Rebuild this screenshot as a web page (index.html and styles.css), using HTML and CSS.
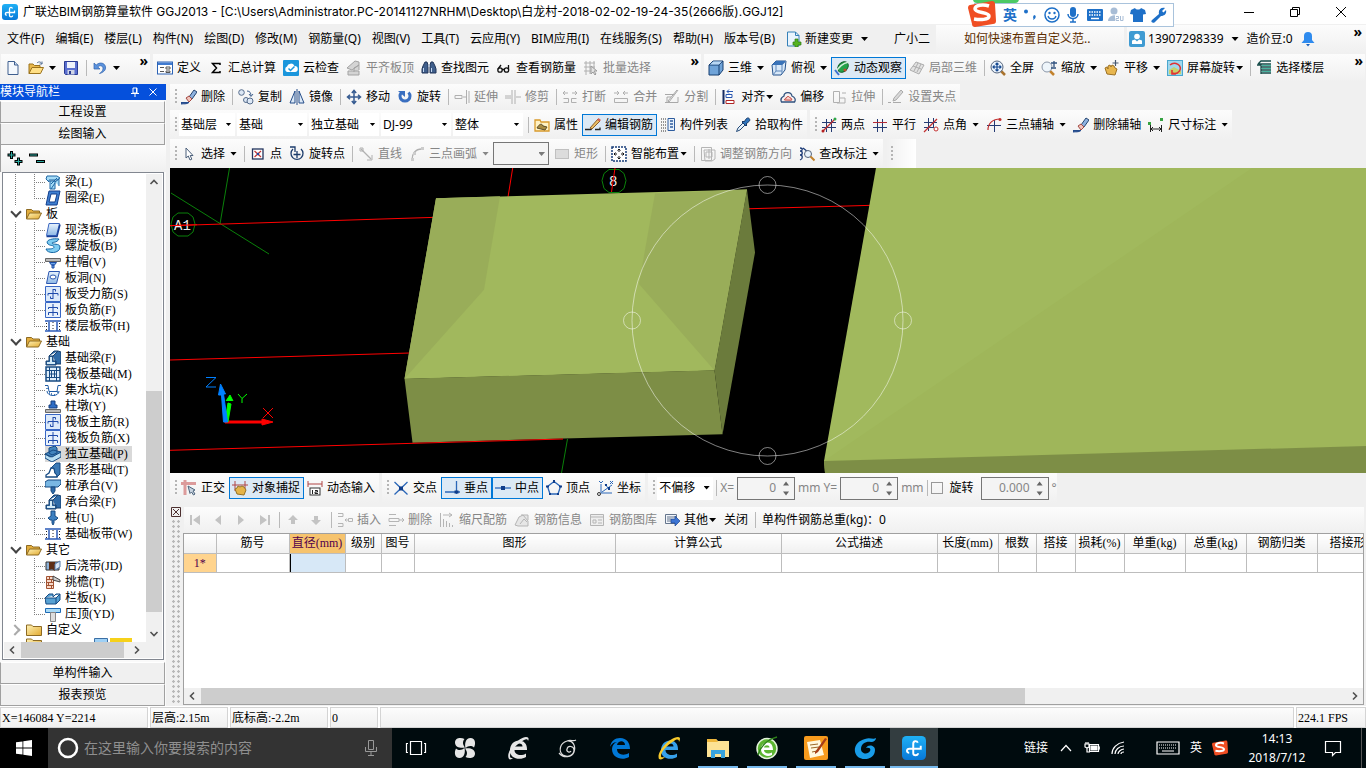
FILE: index.html
```html
<!DOCTYPE html>
<html lang="zh-CN">
<head>
<meta charset="utf-8">
<title>广联达BIM钢筋算量软件 GGJ2013</title>
<link rel="stylesheet" href="styles.css">
</head>
<body>
<svg class="sprite" aria-hidden="true">
<defs>
<linearGradient id="gb" x1="0" y1="0" x2="0" y2="1"><stop offset="0" stop-color="#e8f3fd"/><stop offset="1" stop-color="#8db8e6"/></linearGradient>
<linearGradient id="gy" x1="0" y1="0" x2="1" y2="1"><stop offset="0" stop-color="#fff3b8"/><stop offset="1" stop-color="#e2a92e"/></linearGradient>
<linearGradient id="ga" x1="0" y1="0" x2="0" y2="1"><stop offset="0" stop-color="#1fb0f5"/><stop offset="1" stop-color="#0878d8"/></linearGradient>
<symbol id="app" viewBox="0 0 16 16"><rect width="16" height="16" rx="3" fill="url(#ga)"/><path d="M10.500 4.500C10 3 7.500 3 7.500 5v6.500c0 1.800 3 1.800 3.200 0M12.500 6.500v2H5c-2.200 0-2.200 2.700-.2 2.700" fill="none" stroke="#fff" stroke-width="1.300"/></symbol>
<symbol id="new" viewBox="0 0 16 16"><path d="M3 1.500h6.500L13 5v9.500H3z" fill="#f4f8fd" stroke="#3f5f8f"/><path d="M9.500 1.500V5H13" fill="#c9dbf2" stroke="#3f5f8f"/></symbol>
<symbol id="open" viewBox="0 0 16 16"><path d="M1 13.500V4h4l1.500 1.500H12V8" fill="#e9b84b" stroke="#9b731d"/><path d="M1 13.500 4 7.500h11.500L12.500 13.500z" fill="#ffdf85" stroke="#9b731d"/><path d="M9 3c2-2 4-1 5 1m0-2.500V4h-2.500" fill="none" stroke="#536f94"/></symbol>
<symbol id="save" viewBox="0 0 16 16"><path d="M1.500 1.500h13v13h-12l-1-1z" fill="#5a6fd0" stroke="#2b3b92"/><path d="M4 2h8v6H4z" fill="#eef2fb"/><path d="M4.500 10h7v4.500h-7z" fill="#cfd5e6"/><path d="M6 11h2v3H6z" fill="#2b3b92"/></symbol>
<symbol id="undo" viewBox="0 0 16 16"><path d="M2 3v6h6L5.800 7C8 4.500 11.500 6 11 9c-.3 2-2 3.500-3.500 4.500 4-1 6.500-3.500 6-6.500C13 3 8 1.500 4.200 5z" fill="#5c93dd" stroke="#2e61ad" stroke-width=".7"/></symbol>
<symbol id="define" viewBox="0 0 16 16"><rect x=".5" y="2" width="15" height="12" fill="#fff" stroke="#2c63b5"/><path d="M1 2.500h14V5H1z" fill="#3f7ad0"/><path d="M3 7.500h4M3 11.500h4M9 7h4v2H9zM9 11h4v1.500H9z" stroke="#555" fill="none"/></symbol>
<symbol id="sigma" viewBox="0 0 16 16"><path d="M12 5V3.500H4.500L8.500 8l-4 4.500H12V11" fill="none" stroke="#000" stroke-width="1.500"/></symbol>
<symbol id="cloud" viewBox="0 0 16 16"><rect width="16" height="16" rx="1" fill="#1b96dc"/><path d="M4 12a3 3 0 0 1 0-5.500 4 4 0 0 1 7.500-.5A3 3 0 0 1 12 12z" fill="#fff"/><path d="m5.500 8.500 2 2 4-4" fill="none" stroke="#1b96dc" stroke-width="1.500"/></symbol>
<symbol id="gflat" viewBox="0 0 16 16"><path d="M1 8 9 1l4 1v3L6 10zM2 11h11v4H2zM8 12V8l5-3v5" fill="#d4d4d4" stroke="#a3a3a3"/></symbol>
<symbol id="bino" viewBox="0 0 16 16"><path d="M2 6 4 2h2l1 3v8H1V9zM14 6l-2-4h-2L9 5v8h6V9z" fill="#405f8c" stroke="#203558"/><path d="M2.500 8v4M10.500 8v4M7 6h2" stroke="#c4d9f2"/></symbol>
<symbol id="glass" viewBox="0 0 16 16"><g fill="none" stroke="#111" stroke-width="1.300"><circle cx="4" cy="10" r="2.200"/><circle cx="10.500" cy="10" r="2.200"/><path d="M6 9.500h2.300M2 9l3-4M12.500 9.500V5"/></g></symbol>
<symbol id="gbatch" viewBox="0 0 16 16"><path d="M1 3h11M1 7h11M1 11h7M3 1v14M7 1v13M11 1v8" stroke="#b0b0b0" fill="none"/><path d="M8 6v8l2-2 2 3 1-1-2-3h3z" fill="#e3e3e3" stroke="#9b9b9b"/></symbol>
<symbol id="cube" viewBox="0 0 16 16"><path d="M1 5 5 1h10v9l-4 5H1z" fill="#6fa3d8" stroke="#173e70"/><path d="M1 5h10v10M11 5l4-4" fill="none" stroke="#173e70"/><path d="M2 4.500 5.300 1.500h8.700L11 4.500z" fill="#b9d7f3"/></symbol>
<symbol id="topv" viewBox="0 0 16 16"><path d="M1 5 5 1h10l-1 9-4 5H2z" fill="#d8e8f8" stroke="#24518b"/><path d="M1 5 5 1h10l-4 4z" fill="#3973b9"/><path d="M11 5v9M11 5l4-4M5 5v6h6M5 11l-3 4" fill="none" stroke="#5e87ba"/></symbol>
<symbol id="orbit" viewBox="0 0 16 16"><ellipse cx="9" cy="7" rx="6" ry="4.500" transform="rotate(-45 9 7)" fill="#24a34a" stroke="#12602a"/><path d="M1 14C4 7 9 3 15 2" stroke="#d6efdc" stroke-width="1.500" fill="none"/><path d="m1 10 4 5" stroke="#3c6fd1" stroke-width="2"/><circle cx="11" cy="10" r="1.500" fill="#bf4a31"/></symbol>
<symbol id="gcube" viewBox="0 0 16 16"><path d="M1 10 7 2l8 3-5 9z" fill="#e2e2e2" stroke="#adadad"/><path d="m4 6 8 3M8 12l4-8M5 11l4-8" stroke="#adadad"/></symbol>
<symbol id="full" viewBox="0 0 16 16"><path d="m11 11 4 4" stroke="#a9732e" stroke-width="2.500"/><circle cx="7" cy="7" r="6" fill="#eaf3fc" stroke="#54647c"/><path d="M7 3v8M3 7h8M5.500 4.500 7 3l1.500 1.500M5.500 9.500 7 11l1.500-1.500M4.500 5.500 3 7l1.500 1.500M9.500 5.500 11 7 9.500 8.500" fill="none" stroke="#184a91" stroke-width="1.200"/></symbol>
<symbol id="zoomi" viewBox="0 0 16 16"><path d="m9 11 4 4" stroke="#c2822c" stroke-width="2.500"/><circle cx="6" cy="7" r="5" fill="#eef5fb" stroke="#8b97a8"/><path d="M13 1v6M10 3h6M10 8h5" stroke="#31517f" stroke-width="1.300"/></symbol>
<symbol id="pan" viewBox="0 0 16 16"><path d="M3 14 1 8l2-1 1 2V6l2-1 1 2 1-2 2 1 1 2 2 1-2 6z" fill="#e8b64e" stroke="#9c7125"/><path d="M11.500 0v6M8.500 3h6" stroke="#44566f" stroke-width="1.200"/></symbol>
<symbol id="srot" viewBox="0 0 16 16"><rect x=".5" y=".5" width="15" height="15" fill="#9fd8ee" stroke="#4aa7ce"/><path d="M2 10l5-3 7 4v3H2z" fill="#c6d36c"/><path d="M3 5a6 5 0 1 1 2 8M5 10v4h4" fill="none" stroke="#e03333" stroke-width="1.600"/></symbol>
<symbol id="floors" viewBox="0 0 16 16"><path d="M2 4 5 1h10M3 4h12M5 7h10M5 10h10M5 13h10M1 5h4M5 4v10" fill="none" stroke="#164b49" stroke-width="1.300"/><path d="M6 5.500h9M6 11.500h9M6 8.500h9" stroke="#49b4a0"/></symbol>
<symbol id="brush" viewBox="0 0 16 16"><path d="m8 8 5-7 3 2-5 7z" fill="#8fb2df" stroke="#26456f"/><path d="m5 9 3-2 3 3-3 3z" fill="#f1c4bb" stroke="#a34a43"/><path d="M0 13.500h8c-3 2-5 1-8 1.500z" fill="#244b8d" stroke="#244b8d"/></symbol>
<symbol id="copy" viewBox="0 0 16 16"><g fill="#dde8f5" stroke="#566c8c"><circle cx="3.500" cy="3.500" r="2.800"/><circle cx="8" cy="11" r="2.500"/><circle cx="12" cy="12" r="3"/></g><path d="M9 2c3 0 4 2 4 5m-2-2 2 2.500L15 5" stroke="#41618e" fill="none"/></symbol>
<symbol id="mirror" viewBox="0 0 16 16"><path d="M6 2v12H1zM10 2v12h5z" fill="#dce9f7" stroke="#254d89"/><path d="M8 0v16" stroke="#254d89"/></symbol>
<symbol id="move" viewBox="0 0 16 16"><path d="M8 1.500v13M1.500 8h13M5.800 4 8 1.500 10.200 4M5.800 12 8 14.500l2.200-2.500M4 5.800 1.500 8 4 10.200M12 5.800 14.500 8 12 10.200" fill="none" stroke="#365b91" stroke-width="1.500"/></symbol>
<symbol id="rotate" viewBox="0 0 16 16"><path d="M4.500 3.500a5 5 0 1 0 7 0" fill="none" stroke="#3a6fc0" stroke-width="3"/><path d="M1 2h7v6z" fill="#3a6fc0"/></symbol>
<symbol id="gext" viewBox="0 0 16 16"><path d="M1 6.500h7v3H1zM9 8h3M12.500 1v14M15 2v12" fill="none" stroke="#b0b0b0"/></symbol>
<symbol id="gtrim" viewBox="0 0 16 16"><path d="M7 1v14M10 1v14M0 7h6M0 9h6M11 8h5" fill="none" stroke="#b0b0b0"/></symbol>
<symbol id="gbreak" viewBox="0 0 16 16"><path d="M1 4h5M3 2 1 4l2 2M10 4h5m-2-2 2 2-2 2M1.500 9.500h5v4h-5M14.500 9.500h-5v4h5" fill="none" stroke="#b0b0b0"/></symbol>
<symbol id="gmerge" viewBox="0 0 16 16"><path d="M1 4h5M4 2l2 2-2 2M10 4h5m-3-2-2 2 2 2M1.500 9.500h13v4h-13z" fill="none" stroke="#b0b0b0"/></symbol>
<symbol id="gsplit" viewBox="0 0 16 16"><path d="M1 5.500h9M1 13.500h13V8M3 13V8h4M14 1 5 13l-1-1 9-11" fill="none" stroke="#a8a8a8"/></symbol>
<symbol id="align" viewBox="0 0 16 16"><path d="M2.500 1v14" stroke="#152b62" stroke-width="2"/><path d="M5 5.500h6v3H5z" fill="#fff" stroke="#2856b0"/><path d="M5 11.500h8v3H5z" fill="#fff" stroke="#b02424"/><path d="M6 2.500h6M8 .5l-2 2 2 2" stroke="#2856b0" fill="none"/></symbol>
<symbol id="offset" viewBox="0 0 16 16"><path d="M1.500 13C0 10 2 8 4 7c0-4 7-5 8 0 3 1 4 4 2.500 6z" fill="#f7f2f2" stroke="#30527f" stroke-width="1.300"/><path d="M4.500 11c0-1 1-2 2-2 0-2 3-2 3.500 0 1.500 0 2 1 1.500 2.200z" fill="#f9d1cc" stroke="#c13b34"/></symbol>
<symbol id="gstretch" viewBox="0 0 16 16"><path d="M2.500 2.500h6v11h-6zM9 9h5v5H6" fill="none" stroke="#b0b0b0"/><path d="M11 4h4" stroke="#b0b0b0"/></symbol>
<symbol id="gpin" viewBox="0 0 16 16"><path d="m6 9 7-8 2 2-7 8-3 1zM0 13.500h3M5 13.500h8" fill="#d8d8d8" stroke="#aaa"/></symbol>
<symbol id="prop" viewBox="0 0 16 16"><path d="M1 3h5l1 2h8v9H1z" fill="#fff2c4" stroke="#d99b2c" stroke-width="1.300"/><path d="M3 11c2-4 5-5 6-2l4 1-2 3z" fill="#a88b42" stroke="#5b4c27"/></symbol>
<symbol id="edit" viewBox="0 0 16 16"><path d="M0 12.500h6l2-3M10 12.500h5v-2" stroke="#222" stroke-width="1.300" fill="none"/><path d="m5 11 8-9 2 2-8 8z" fill="#e9bd66" stroke="#8b5e29"/><path d="m12 3 1.500-2L16 3l-1.500 1.500z" fill="#d35f52"/></symbol>
<symbol id="list" viewBox="0 0 16 16"><path d="M1 2h5M1 5h5M1 8h5M1 11h5M1 14h5" stroke="#333" stroke-dasharray="1 1"/><path d="M8 1.500h6.500v12H8z" fill="#e8f1fb" stroke="#2e5c9e"/><path d="M10 4h3M10 7h3M10 10h3" stroke="#2e5c9e" stroke-width="1.500"/></symbol>
<symbol id="pick" viewBox="0 0 16 16"><path d="M1.500 14.500 3 11l5-5 2 2-5 5z" fill="#e8f3fc" stroke="#244a78"/><path d="M7 5l1-1 1 1 2.500-3.500c2-1.500 4 .5 3 2.500L11 7l1 1-1 1z" fill="#2f75bd" stroke="#183a69"/></symbol>
<symbol id="two" viewBox="0 0 16 16"><path d="M5.500 2v13M10.500 2v13M1 5.500h14M1 10.500h14" stroke="#253b73"/><path d="M2 14 14 2" stroke="#c33030" stroke-width="1.200"/><circle cx="14" cy="2" r="1.500" fill="#2ea84a"/><circle cx="2" cy="14" r="1.500" fill="#b52020"/></symbol>
<symbol id="para" viewBox="0 0 16 16"><path d="M5.500 2v13M10.500 2v13" stroke="#253b73"/><path d="M1 10.500h14" stroke="#253b73"/><path d="M1 5.500h14" stroke="#b52b35"/></symbol>
<symbol id="angle" viewBox="0 0 16 16"><path d="M5.500 1v13M10.500 1v9M1 5.500h13M1 10.500h10" stroke="#253b73"/><path d="m1 15 13-13" stroke="#c33030" stroke-width="1.200"/><circle cx="13" cy="12" r="2" fill="#fff" stroke="#c33030"/></symbol>
<symbol id="arc3" viewBox="0 0 16 16"><path d="M8.500 3v12M1 8.500h14" stroke="#253b73"/><path d="M2 13C2 6 7 2 14 2" fill="none" stroke="#c33030" stroke-width="1.200"/><circle cx="14" cy="2.500" r="1.500" fill="#c33030"/></symbol>
<symbol id="dim" viewBox="0 0 16 16"><path d="M2.500 8v7M13.500 8v7M3 12h10M5 10l-2 2 2 2M11 10l2 2-2 2" stroke="#222" fill="none"/><path d="M0 5h3v3H0zM12 1h3v3h-3z" fill="#35a341"/></symbol>
<symbol id="cursor" viewBox="0 0 16 16"><path d="M5 2v10l2.300-2L9 14l1.800-.8L9.200 9.500H12z" fill="#fff" stroke="#4b5f7a"/></symbol>
<symbol id="pt" viewBox="0 0 16 16"><rect x="2.500" y="3" width="10.500" height="10" fill="#fff" stroke="#23345d" stroke-width="1.300"/><path d="m4.500 5 6.500 6M11 5l-6.500 6" stroke="#c23535" stroke-width="1.200"/><circle cx="8" cy="8" r="1.300" fill="#2348a0"/></symbol>
<symbol id="rotpt" viewBox="0 0 16 16"><path d="M4 3a6 6 0 1 0 8 0M8 5v7M4.500 8.500h7" fill="none" stroke="#1c3c6c" stroke-width="1.300"/><path d="M1 1h5v5" fill="none" stroke="#1c3c6c" stroke-width="1.300"/></symbol>
<symbol id="gline" viewBox="0 0 16 16"><path d="m3 3 10 10" stroke="#b0b0b0" stroke-width="1.300"/><path d="M2 2h3v3H2zM14 9v5H9" fill="none" stroke="#b0b0b0"/></symbol>
<symbol id="garc" viewBox="0 0 16 16"><path d="M3 14C3 8 6 3 13 3" fill="none" stroke="#b0b0b0" stroke-width="1.300"/><path d="M2 12h3v3H2zM4 6h3v3H4zM12 1h3v3h-3z" fill="#ccc"/></symbol>
<symbol id="grect" viewBox="0 0 16 16"><rect x="1.500" y="3.500" width="13" height="9" fill="#dcdcdc" stroke="#c0c0c0"/></symbol>
<symbol id="smart" viewBox="0 0 16 16"><rect x="1" y="1" width="14" height="14" fill="#fff" stroke="#173d78" stroke-width="1.500" stroke-dasharray="2 1"/><path d="M8 3v3M8 10v3M3 8h3M10 8h3M6.500 4.500 8 3l1.500 1.500M6.500 11.500 8 13l1.500-1.500M4.500 6.500 3 8l1.500 1.500M11.500 6.500 13 8l-1.500 1.500" stroke="#111" fill="none"/></symbol>
<symbol id="gadj" viewBox="0 0 16 16"><path d="M1.500 1.500h10v13h-10zM4 4h11v9l-3 2H5z" fill="none" stroke="#b5b5b5"/><path d="M6 6h6v5H6zM9 3v10" fill="none" stroke="#b5b5b5"/></symbol>
<symbol id="chk" viewBox="0 0 16 16"><path d="M1 2c3 0 3 3 0 3 3 0 3 4 0 4 3 0 3 4 0 5M4 2l5 4" stroke="#1c3b77" fill="none" stroke-width="1.300"/><circle cx="9" cy="8" r="3.500" fill="#e9f3fc" stroke="#54647c"/><path d="m11.500 10.500 4 4" stroke="#c2822c" stroke-width="2"/></symbol>
<symbol id="ortho" viewBox="0 0 16 16"><path d="M0 3.500h15M4 0v15" stroke="#dc9b9b" stroke-width="3"/><path d="m7 6 7 4-2 1 2 3-1.500 1L10.500 12 9 13.500z" fill="#c8d3df" stroke="#4d647c"/></symbol>
<symbol id="snap" viewBox="0 0 16 16"><path d="M0 5h16M3 1v10M13 1v8" stroke="#b04444"/><path d="M5 14 3 9l2-1 1-2 2 1 2-1 2 1 2 3-2 5z" fill="#e5b449" stroke="#957125"/></symbol>
<symbol id="dyn" viewBox="0 0 16 16"><path d="M1 1v6M15 1v6M1 4h14" stroke="#b04444"/><rect x="3" y="8" width="10" height="7" fill="#fff" stroke="#333"/><path d="M5.500 10v4M8 10.500h2.500V12H8v1.500h3" stroke="#222" fill="none"/></symbol>
<symbol id="cross" viewBox="0 0 16 16"><path d="m1.500 2 13 12.500M14.500 2 1.500 14.500" stroke="#2b67b8" stroke-width="1.300"/><path d="M6 6.500h4v4H6z" fill="#103d8a"/></symbol>
<symbol id="perp" viewBox="0 0 16 16"><path d="M1 12h15M12.500 1v13" stroke="#2b67b8" stroke-width="1.300"/><path d="M10.500 10.500h4v3h-4z" fill="#103d8a"/></symbol>
<symbol id="mid" viewBox="0 0 16 16"><path d="M0 8h16" stroke="#2b67b8" stroke-width="1.300"/><path d="M6 6h4v4H6z" fill="#103d8a"/></symbol>
<symbol id="vert" viewBox="0 0 16 16"><path d="m8 1.500 6.500 5-2.500 7.500H4L1.500 6.500z" fill="none" stroke="#2b67b8" stroke-width="1.300"/><path d="M7 0h2v3H7zM0 5.500h3v2H0zM13 5.500h3v2h-3zM3 13h2v2H3zM11 13h2v2h-2z" fill="#103d8a"/></symbol>
<symbol id="coord" viewBox="0 0 16 16"><path d="M4 4v9h11M2 1l2 2 2-2M13 1l3 3M16 1l-3 3M5 12 15 5M8 4l3 4" stroke="#2b67b8" fill="none"/><circle cx="2" cy="14" r="1.500" fill="none" stroke="#333"/><path d="M8 4h2v2H8zM11 7h2v3h-2z" fill="#103d8a"/></symbol>
<symbol id="nfirst" viewBox="0 0 16 16"><path d="M3 3h2v10H3zM13 3v10L6 8z" fill="#c3c3c3"/></symbol>
<symbol id="nprev" viewBox="0 0 16 16"><path d="M11 3v10L5 8z" fill="#c3c3c3"/></symbol>
<symbol id="nnext" viewBox="0 0 16 16"><path d="M5 3v10l6-5z" fill="#c3c3c3"/></symbol>
<symbol id="nlast" viewBox="0 0 16 16"><path d="M12 3h2v10h-2zM4 3v10l7-5z" fill="#c3c3c3"/></symbol>
<symbol id="nup" viewBox="0 0 16 16"><path d="m8 3 5 5h-3v4H6V8H3z" fill="#c3c3c3"/></symbol>
<symbol id="ndown" viewBox="0 0 16 16"><path d="m8 13 5-5h-3V4H6v4H3z" fill="#c3c3c3"/></symbol>
<symbol id="gins" viewBox="0 0 16 16"><path d="M1 1.500h5v3H1M1 11.500h5v3H1M8 8h3M9.500 6.500 8 8l1.500 1.500M11.500 6.500h4v3h-4z" fill="none" stroke="#b5b5b5"/></symbol>
<symbol id="gdel" viewBox="0 0 16 16"><path d="M1 2.500h7M1 6.500h10v3H1zM1 13.500h7M11 8h5M14 6l2 2-2 2" fill="none" stroke="#b5b5b5"/></symbol>
<symbol id="gscale" viewBox="0 0 16 16"><path d="M1.500 15V1M4 3h9M10 1l3 2-3 2M4.500 7v8M7.500 9v6M10.500 11v4M13.500 13v2" fill="none" stroke="#b5b5b5"/></symbol>
<symbol id="ginfo" viewBox="0 0 16 16"><path d="M1 13 5 5l4-2 5 6v5H4zM7 3h7v5M6 12l4-5 3 3" fill="#e6e6e6" stroke="#b5b5b5"/></symbol>
<symbol id="glib" viewBox="0 0 16 16"><path d="M1.500 2.500h13v11h-13zM2 5h12M4 8h3v3H4zM9 8h4M9 11h4" fill="#eee" stroke="#b5b5b5"/></symbol>
<symbol id="other" viewBox="0 0 16 16"><path d="M1.500 2.500h11v9h-11z" fill="#f2f6fb" stroke="#65758c"/><path d="M3 5h8M3 7h4M3 9h4" stroke="#65758c"/><path d="M7 7h4V4l5 5-5 5v-3H7z" fill="#3c74d3" stroke="#1e4690" stroke-width=".7"/></symbol>
<symbol id="change" viewBox="0 0 16 16"><path d="M1.500 1h8L13 4.500V15H1.500z" fill="#e9f4fd" stroke="#3580b8"/><path d="M9.500 1v3.500H13" fill="none" stroke="#3580b8"/><path d="M9 8h3v3h3v3h-3v2H9v-2H7v-3h2z" fill="#55b321" stroke="#2e7d16" stroke-width=".7"/></symbol>
<symbol id="user" viewBox="0 0 16 16"><rect width="16" height="16" rx="2" fill="#3f9bd2"/><circle cx="8" cy="5.500" r="2.800" fill="#fff"/><path d="M3 13V9.500l3-1 2 2 2-2 3 1V13z" fill="#fff"/></symbol>
<symbol id="bell" viewBox="0 0 14 16"><path d="M7 1a4 4 0 0 1 4 4v4l2.500 3H.5L3 9V5a4 4 0 0 1 4-4z" fill="#2f8bee"/><path d="M5 13h4l-2 2.500z" fill="#1a62bd"/></symbol>
<symbol id="folder" viewBox="0 0 16 16"><path d="M.5 13V3.500h5L7 5h6.500v3" fill="#e2ad3d" stroke="#8d6a23"/><path d="m.5 13 3-6h12l-3 6z" fill="url(#gy)" stroke="#8d6a23"/></symbol>
<symbol id="fclosed" viewBox="0 0 16 16"><path d="M.5 13.500V3h5L7 4.500h8.500v9z" fill="url(#gy)" stroke="#8d6a23"/></symbol>
<symbol id="t-beam" viewBox="0 0 16 16"><path d="M2 2h10l3 2-3 2H4v2L1 5zM5 7h5v8H5zM10 8l4-3v7" fill="#a6dcf7" stroke="#1d67a5"/><path d="m6 15 4-6M6 10l6-6" stroke="#1d67a5"/></symbol>
<symbol id="t-ring" viewBox="0 0 16 16"><path d="M4 1h11l-3 14H1z" fill="#3f7fd0" stroke="#123e8c"/><path d="M6 4h6l-2 8H4z" fill="#fff" stroke="#123e8c"/></symbol>
<symbol id="t-slab" viewBox="0 0 16 16"><path d="M4 1.500h10.500l-3 12H1.500z" fill="url(#gb)" stroke="#3b66c0"/><path d="M1.500 14.500h10.500l3-12" stroke="#173f96" fill="none" stroke-width="1.500"/></symbol>
<symbol id="t-spiral" viewBox="0 0 16 16"><path d="M14 1C5 0 0 3 3 6c2 2 6 1 6 3s-4 2-8 2c1 5 14 5 14-2 0-4-8-2-8-4 0-1 5 0 7-4z" fill="#7fcdf2" stroke="#1467a5"/></symbol>
<symbol id="t-cap" viewBox="0 0 16 16"><path d="M.5 4.500h15v3H.5z" fill="#bbb" stroke="#666"/><path d="M4.500 8.500h7l-2 2.500H6.500zM7 11h2v3H7z" fill="#6ca6ea" stroke="#1c4ca5"/></symbol>
<symbol id="t-hole" viewBox="0 0 16 16"><path d="M4 1.500h10.500l-3 12H1.500z" fill="url(#gb)" stroke="#2b56b0"/><ellipse cx="8" cy="7" rx="3" ry="2" fill="#fff" stroke="#2b56b0"/></symbol>
<symbol id="t-rebar" viewBox="0 0 16 16"><path d="M.5.5h15v15H.5z" fill="#dceafa" stroke="#3867c5"/><path d="M3 9.500v-2h10v2M8 3v10M8 3.500h2.500v2M8 12.500H5.500v-2" stroke="#1f4bab" fill="none"/></symbol>
<symbol id="t-neg" viewBox="0 0 16 16"><path d="M.5.500h15v15H.500z" fill="#e9f2fc" stroke="#3867c5"/><path d="M3.500 7V5.500h9V7M3.500 13v-2.500h9V13M8 2v12" stroke="#1f4bab" fill="none"/></symbol>
<symbol id="t-band" viewBox="0 0 16 16"><path d="M0 3h16M0 13h16M4 4v9M12 4v9" stroke="#2b5bb8" stroke-width="1.500"/><path d="M1.500 5v7M8 4v9M14.500 5v7" stroke="#222" stroke-dasharray="1 2"/></symbol>
<symbol id="t-fbeam" viewBox="0 0 16 16"><path d="M1 15v-4h3V6h4v5h3v4zM8 6l5-5 3 1v12h-5M4 6l5-5h4" fill="#2f6ba8" stroke="#173f6d"/><path d="M2 12h3V7h2v5h3v2H2z" fill="#d4ebf8"/></symbol>
<symbol id="t-raft" viewBox="0 0 16 16"><path d="M1 1h14v14H1z" fill="#dfeefa" stroke="#174b83" stroke-width="1.500"/><path d="M4.500 1v14M11.500 1v14M1 4.500h14M1 11.500h14M6.500 4.500v7M9.500 4.500v7M4.500 8h7" stroke="#174b83"/></symbol>
<symbol id="t-pit" viewBox="0 0 16 16"><path d="M0 3.500h3l1 6h8l1-6h3M2 9c0 6 12 6 12 0" fill="none" stroke="#1f5ca5"/><path d="M2 6v1M6 12h1M9 13h1M12 10h1M4 11h1" stroke="#1f5ca5" stroke-width="1.500"/></symbol>
<symbol id="t-pier" viewBox="0 0 16 16"><path d="M.5 11.500h15v3H.5z" fill="#bbb" stroke="#666"/><path d="M6 3h4v4h2v3H4V7h2z" fill="#2f6dc5" stroke="#173f7d"/></symbol>
<symbol id="t-iso" viewBox="0 0 16 16"><path d="m0 8 5 3 11-5v5L7 16 0 12z" fill="#b8def2" stroke="#174b83"/><path d="m0 8 8-4 8 2-9 5zM4 2l6-2 2 2v5L7 9 4 7z" fill="#4284bd" stroke="#174b83"/></symbol>
<symbol id="t-strip" viewBox="0 0 16 16"><path d="M1 15v-2l3-2 2-5h3l1 5 2 2v2z" fill="#fff" stroke="#174b83" stroke-width="1.300"/><path d="m6 6 5-5h4v11l-3 3v-2l-2-2-1-5z" fill="#3b79b5" stroke="#174b83"/></symbol>
<symbol id="t-pcap" viewBox="0 0 16 16"><path d="m0 4 3-2h13v4l-3 3H0z" fill="#79b7e3" stroke="#174b83"/><path d="M6 9h4v4l-2 3-2-3z" fill="#2f6ba8" stroke="#174b83"/></symbol>
<symbol id="t-pile" viewBox="0 0 16 16"><path d="M6 1h4v5l3 2-2 2H9v3l-1 2-1-2v-3H5L3 8l3-2z" fill="#3b7fc0" stroke="#174b83"/></symbol>
<symbol id="t-post" viewBox="0 0 16 16"><path d="M1 4h13v8H1z" fill="#8db2d8" stroke="#333"/><path d="M4 4h6v9l-3-2-3 1z" fill="#5d2e16"/><path d="M10 6l5-3v6l-5 3z" fill="#d9e6f5" stroke="#5479a8"/></symbol>
<symbol id="t-eave" viewBox="0 0 16 16"><path d="M1.500 2.500h7v12h-7z" fill="#f6d9ca" stroke="#a35332"/><path d="M1.500 5.500h7M1.500 8.500h7M1.500 11.500h7M4.500 2v3M6.500 5v3M3.500 8v3M6.500 11v4" stroke="#a35332"/><path d="M8 2l7 4v2L8 6z" fill="#ccc" stroke="#444"/></symbol>
<symbol id="t-rail" viewBox="0 0 16 16"><path d="M0 8h11v6H1zM11 8l4-4v6l-4 4M0 8l4-4h4v3l3-3h4" fill="#57a1d3" stroke="#174b83"/></symbol>
<symbol id="t-top" viewBox="0 0 16 16"><path d="M.5 2.500h15v4H.5z" fill="#a9daf6" stroke="#1f6bb5"/><path d="M5.500 6.500h5v9h-5z" fill="#ddd" stroke="#888"/></symbol>
<symbol id="sogou" viewBox="0 0 28 28"><path d="M2 5 24 1c2 0 3 1 3 3l1 17c0 2-1 3-3 3L7 27c-2 0-3-1-3-3L0 8c0-2 1-3 2-3z" fill="#f04e23"/><path d="M21 6c-6-2-14-1-14 3s14 3 14 7-9 4-15 3" fill="none" stroke="#fff" stroke-width="3.500"/></symbol>
<symbol id="eglyph" viewBox="0 0 24 24"><path d="M21 14H8.500c0 3.500 3 5 6 5 2 0 4-.5 5.500-1.500V21c-2 1.200-4 1.800-6.500 1.800C8 22.800 4 20 4 14.500 4 8 8.500 4.500 13 4.500c5 0 8 3.500 8 8.500zm-4.500-3.500c0-2-1.200-3-3.500-3s-4 1.200-4.500 3z"/></symbol>
<symbol id="win" viewBox="0 0 16 16"><path d="M0 2.300 6.500 1.400v6.200H0zM7.300 1.300 16 0v7.600H7.300zM0 8.400h6.500v6.200L0 13.700zM7.300 8.400H16V16l-8.700-1.300z" fill="#fff"/></symbol>
</defs>
</svg>

<header class="titlebar">
<svg class="i"><use href="#app"/></svg>
<h1>广联达BIM钢筋算量软件 GGJ2013 - [C:\Users\Administrator.PC-20141127NRHM\Desktop\白龙村-2018-02-02-19-24-35(2666版).GGJ12]</h1>
<div class="winbtns">
<button aria-label="最小化"><svg viewBox="0 0 12 12"><path d="M1 6.500h10"/></svg></button>
<button aria-label="还原"><svg viewBox="0 0 12 12"><path d="M1.500 3.500h7v7h-7zM3.500 3V1.500h7v7H9"/></svg></button>
<button aria-label="关闭"><svg viewBox="0 0 12 12"><path d="m1 1 10 10M11 1 1 11"/></svg></button>
</div>
<div class="ime">
<span class="blob"></span>
<svg class="logo"><use href="#sogou"/></svg>
<b>英</b>
<svg class="m" viewBox="0 0 16 16"><circle cx="4" cy="4.500" r="2"/><path d="M12 8c2 0 3 3-1 5 1-2 0-2 0-3z"/></svg>
<svg class="m" viewBox="0 0 16 16"><circle cx="8" cy="8" r="7" fill="none" stroke="#1e70c8" stroke-width="1.500"/><circle cx="5.500" cy="6" r="1.200"/><circle cx="10.500" cy="6" r="1.200"/><path d="M4 9c1 4 7 4 8 0" fill="none" stroke="#1e70c8" stroke-width="1.300"/></svg>
<svg class="m" viewBox="0 0 16 16"><rect x="5" y="0" width="6" height="10" rx="3"/><path d="M3 7c0 6 10 6 10 0M8 12v3M5 15h6" fill="none" stroke="#1e70c8" stroke-width="1.500"/></svg>
<svg class="m" viewBox="0 0 16 16"><rect x="0" y="2" width="16" height="12" rx="1"/><path d="M2 5h12M2 8h12" stroke="#fff" stroke-width="1.500" stroke-dasharray="1.500 1"/><path d="M4 11.500h8" stroke="#fff" stroke-width="1.500"/></svg>
<svg class="m pale" viewBox="0 0 16 16"><circle cx="6" cy="4" r="3.500"/><path d="M0 14c0-7 12-7 12-3v3z"/><path d="M7 8h9v7H7z" fill="#fff"/><path d="M8 9.500h2.500v2H8v2h3M12.500 9v4.500h2.500V9" fill="none" stroke="#a8bdd6"/></svg>
<svg class="m" viewBox="0 0 16 16"><path d="M1 3l4-2c1 2 5 2 6 0l4 2 1 4-3 .5V15H3V7.500L0 7z"/></svg>
<svg class="m" viewBox="0 0 16 16"><path d="M1 13 8 7c-1-4 2-7 6-6l-3 3 1.500 1.500L15 3c1 4-2 6-5 6l-6 6c-2 2-5 0-3-2z"/></svg>
</div>
</header>

<nav class="menubar">
<button>文件(F)</button><button>编辑(E)</button><button>楼层(L)</button><button>构件(N)</button><button>绘图(D)</button><button>修改(M)</button><button>钢筋量(Q)</button><button>视图(V)</button><button>工具(T)</button><button>云应用(Y)</button><button>BIM应用(I)</button><button>在线服务(S)</button><button>帮助(H)</button><button>版本号(B)</button>
<button class="ic"><svg class="i"><use href="#change"/></svg>新建变更<span class="dd"></span></button>
<button class="who">广小二</button>
<a class="tip" href="#">如何快速布置自定义范..</a>
<div class="account"><button class="ic"><svg class="i"><use href="#user"/></svg>13907298339<span class="dd"></span></button><span>造价豆:0</span><button class="bellbtn" aria-label="消息"><svg><use href="#bell"/></svg></button><span class="more">»</span></div>
</nav>

<div class="row std">
<div class="panel pa"><button class="b" aria-label="新建"><svg class="i"><use href="#new"/></svg></button><button class="b" aria-label="打开"><svg class="i"><use href="#open"/></svg><span class="dd"></span></button><button class="b" aria-label="保存"><svg class="i"><use href="#save"/></svg></button><span class="sep"></span><button class="b" aria-label="撤销"><svg class="i"><use href="#undo"/></svg><span class="dd"></span></button><span class="more">»</span></div>
<div class="panel pb"><button class="b"><svg class="i"><use href="#define"/></svg>定义</button><button class="b"><svg class="i"><use href="#sigma"/></svg>汇总计算</button><button class="b"><svg class="i"><use href="#cloud"/></svg>云检查</button><button class="b off"><svg class="i"><use href="#gflat"/></svg>平齐板顶</button><button class="b"><svg class="i"><use href="#bino"/></svg>查找图元</button><button class="b"><svg class="i"><use href="#glass"/></svg>查看钢筋量</button><button class="b off"><svg class="i"><use href="#gbatch"/></svg>批量选择</button><span class="more">»</span></div>
<div class="panel pc"><button class="b"><svg class="i"><use href="#cube"/></svg>三维<span class="dd"></span></button><button class="b"><svg class="i"><use href="#topv"/></svg>俯视<span class="dd"></span></button><button class="b on"><svg class="i"><use href="#orbit"/></svg>动态观察</button><button class="b off"><svg class="i"><use href="#gcube"/></svg>局部三维</button><span class="sep"></span><button class="b"><svg class="i"><use href="#full"/></svg>全屏</button><button class="b"><svg class="i"><use href="#zoomi"/></svg>缩放<span class="dd"></span></button><button class="b"><svg class="i"><use href="#pan"/></svg>平移<span class="dd"></span></button><button class="b"><svg class="i"><use href="#srot"/></svg>屏幕旋转<span class="dd t"></span></button><span class="sep"></span><button class="b"><svg class="i"><use href="#floors"/></svg>选择楼层</button><span class="more">»</span></div>
</div>

<div class="main">
<aside class="side">
<div class="sidehead"><h2>模块导航栏</h2><button aria-label="固定"><svg viewBox="0 0 10 10"><path d="M3 1h4v5H3zM1 6.500h8M5 7v3M6.500 1v5"/></svg></button><button aria-label="关闭"><svg viewBox="0 0 10 10"><path d="m1.500 1.500 7 7M8.500 1.500l-7 7"/></svg></button></div>
<button class="navbtn">工程设置</button>
<button class="navbtn">绘图输入</button>
<div class="treetools"><button aria-label="全部展开"><svg viewBox="0 0 16 16"><path d="M4.500 0v8M.5 4h8M11.500 6.500v8M7.500 10.500h8" stroke="#000" stroke-width="3"/><path d="M4.500 1v6M1.500 4h6M11.500 7.500v6M8.500 10.500h6" stroke="#2aa9a0"/></svg></button><button aria-label="全部折叠"><svg viewBox="0 0 16 16"><path d="M0 4h9M7 10.500h9" stroke="#000" stroke-width="3"/><path d="M1 4h7M8 10.500h7" stroke="#2aa9a0"/></svg></button></div>
<div class="treebox">
<div class="treeview">
<ul class="tree">
<li><i class="g"></i><svg class="i"><use href="#t-beam"/></svg><span>梁(L)</span></li>
<li><i class="g end"></i><svg class="i"><use href="#t-ring"/></svg><span>圈梁(E)</span></li>
<li class="f"><i class="ch"></i><svg class="i"><use href="#folder"/></svg><span>板</span></li>
<li><i class="g"></i><svg class="i"><use href="#t-slab"/></svg><span>现浇板(B)</span></li>
<li><i class="g"></i><svg class="i"><use href="#t-spiral"/></svg><span>螺旋板(B)</span></li>
<li><i class="g"></i><svg class="i"><use href="#t-cap"/></svg><span>柱帽(V)</span></li>
<li><i class="g"></i><svg class="i"><use href="#t-hole"/></svg><span>板洞(N)</span></li>
<li><i class="g"></i><svg class="i"><use href="#t-rebar"/></svg><span>板受力筋(S)</span></li>
<li><i class="g"></i><svg class="i"><use href="#t-neg"/></svg><span>板负筋(F)</span></li>
<li><i class="g end"></i><svg class="i"><use href="#t-band"/></svg><span>楼层板带(H)</span></li>
<li class="f"><i class="ch"></i><svg class="i"><use href="#folder"/></svg><span>基础</span></li>
<li><i class="g"></i><svg class="i"><use href="#t-fbeam"/></svg><span>基础梁(F)</span></li>
<li><i class="g"></i><svg class="i"><use href="#t-raft"/></svg><span>筏板基础(M)</span></li>
<li><i class="g"></i><svg class="i"><use href="#t-pit"/></svg><span>集水坑(K)</span></li>
<li><i class="g"></i><svg class="i"><use href="#t-pier"/></svg><span>柱墩(Y)</span></li>
<li><i class="g"></i><svg class="i"><use href="#t-rebar"/></svg><span>筏板主筋(R)</span></li>
<li><i class="g"></i><svg class="i"><use href="#t-neg"/></svg><span>筏板负筋(X)</span></li>
<li><i class="g"></i><svg class="i sel"><use href="#t-iso"/></svg><span class="sel">独立基础(P)</span></li>
<li><i class="g"></i><svg class="i"><use href="#t-strip"/></svg><span>条形基础(T)</span></li>
<li><i class="g"></i><svg class="i"><use href="#t-pcap"/></svg><span>桩承台(V)</span></li>
<li><i class="g"></i><svg class="i"><use href="#t-fbeam"/></svg><span>承台梁(F)</span></li>
<li><i class="g"></i><svg class="i"><use href="#t-pile"/></svg><span>桩(U)</span></li>
<li><i class="g end"></i><svg class="i"><use href="#t-band"/></svg><span>基础板带(W)</span></li>
<li class="f"><i class="ch"></i><svg class="i"><use href="#folder"/></svg><span>其它</span></li>
<li><i class="g"></i><svg class="i"><use href="#t-post"/></svg><span>后浇带(JD)</span></li>
<li><i class="g"></i><svg class="i"><use href="#t-eave"/></svg><span>挑檐(T)</span></li>
<li><i class="g"></i><svg class="i"><use href="#t-rail"/></svg><span>栏板(K)</span></li>
<li><i class="g end"></i><svg class="i"><use href="#t-top"/></svg><span>压顶(YD)</span></li>
<li class="f"><i class="ch shut"></i><svg class="i"><use href="#fclosed"/></svg><span>自定义</span></li>
<li class="f"><i class="ch none"></i><svg class="i" viewBox="0 2 16 16"><use href="#fclosed" width="16" height="16"/></svg><svg class="badge" viewBox="0 0 40 16"><path d="M.5.500h13v12H.500z" fill="#9ed0f5" stroke="#3b6fa5"/><path d="M16 0h22v12H16z" fill="#f6d11a"/></svg></li>
</ul>
<div class="vbar"><svg class="ar" viewBox="0 0 10 10"><path d="m1.500 7 3.500-3.500L8.500 7"/></svg><span class="track"><span class="vthumb"></span></span><svg class="ar" viewBox="0 0 10 10"><path d="M1.500 3 5 6.500 8.500 3"/></svg></div>
</div>
<div class="hbar"><svg class="ar" viewBox="0 0 10 10"><path d="M7 1.500 3.500 5 7 8.500"/></svg><span class="track"><span class="hthumb"></span></span><svg class="ar" viewBox="0 0 10 10"><path d="M3 1.500 6.500 5 3 8.500"/></svg></div>
</div>
<button class="navbtn">单构件输入</button>
<button class="navbtn">报表预览</button>
</aside>

<section class="work">
<div class="row edit"><div class="panel"><span class="grip"></span><button class="b"><svg class="i"><use href="#brush"/></svg>删除</button><span class="sep"></span><button class="b"><svg class="i"><use href="#copy"/></svg>复制</button><button class="b"><svg class="i"><use href="#mirror"/></svg>镜像</button><span class="sep"></span><button class="b"><svg class="i"><use href="#move"/></svg>移动</button><button class="b"><svg class="i"><use href="#rotate"/></svg>旋转</button><span class="sep"></span><button class="b off"><svg class="i"><use href="#gext"/></svg>延伸</button><button class="b off"><svg class="i"><use href="#gtrim"/></svg>修剪</button><span class="sep"></span><button class="b off"><svg class="i"><use href="#gbreak"/></svg>打断</button><button class="b off"><svg class="i"><use href="#gmerge"/></svg>合并</button><button class="b off"><svg class="i"><use href="#gsplit"/></svg>分割</button><span class="sep"></span><button class="b"><svg class="i"><use href="#align"/></svg>对齐<span class="dd t"></span></button><button class="b"><svg class="i"><use href="#offset"/></svg>偏移</button><button class="b off"><svg class="i"><use href="#gstretch"/></svg>拉伸</button><span class="sep"></span><button class="b off"><svg class="i"><use href="#gpin"/></svg>设置夹点</button></div></div>

<div class="row comp"><div class="panel"><span class="grip"></span>
<span class="combo s"><select aria-label="楼层"><option>基础层</option></select></span><span class="combo"><select aria-label="构件类别"><option>基础</option></select></span><span class="combo"><select aria-label="构件类型"><option>独立基础</option></select></span><span class="combo"><select aria-label="构件"><option>DJ-99</option></select></span><span class="combo"><select aria-label="单元"><option>整体</option></select></span>
<span class="sep"></span><button class="b"><svg class="i"><use href="#prop"/></svg>属性</button><button class="b on"><svg class="i"><use href="#edit"/></svg>编辑钢筋</button><button class="b"><svg class="i"><use href="#list"/></svg>构件列表</button><button class="b"><svg class="i"><use href="#pick"/></svg>拾取构件</button></div>
<div class="panel"><span class="grip"></span><button class="b"><svg class="i"><use href="#two"/></svg>两点</button><button class="b"><svg class="i"><use href="#para"/></svg>平行</button><button class="b"><svg class="i"><use href="#angle"/></svg>点角<span class="dd"></span></button><button class="b"><svg class="i"><use href="#arc3"/></svg>三点辅轴<span class="dd"></span></button><button class="b"><svg class="i"><use href="#brush"/></svg>删除辅轴</button><button class="b"><svg class="i"><use href="#dim"/></svg>尺寸标注<span class="dd"></span></button></div></div>

<div class="row draw"><div class="panel"><span class="grip"></span><button class="b"><svg class="i"><use href="#cursor"/></svg>选择<span class="dd"></span></button><span class="sep"></span><button class="b"><svg class="i"><use href="#pt"/></svg>点</button><button class="b"><svg class="i"><use href="#rotpt"/></svg>旋转点</button><span class="sep"></span><button class="b off"><svg class="i"><use href="#gline"/></svg>直线</button><button class="b off"><svg class="i"><use href="#garc"/></svg>三点画弧<span class="dd"></span></button><span class="combo s box"><select aria-label="弧参数" disabled><option></option></select></span><button class="b off"><svg class="i"><use href="#grect"/></svg>矩形</button><span class="sep"></span><button class="b"><svg class="i"><use href="#smart"/></svg>智能布置<span class="dd t"></span></button><span class="sep"></span><button class="b off"><svg class="i"><use href="#gadj"/></svg>调整钢筋方向</button><button class="b"><svg class="i"><use href="#chk"/></svg>查改标注<span class="dd"></span></button></div>
<div class="panel stub"><span class="grip"></span></div></div>

<div class="canvas">
<svg viewBox="170 168 1196 305" preserveAspectRatio="xMinYMin slice" role="img" aria-label="三维视图">
<rect x="170" y="168" width="1196" height="305" fill="#000"/>
<g stroke="#0a800a" fill="none"><path d="m171 193 98 61M229.500 168 220 224M567.500 439l-6 34"/></g>
<g stroke="#f00" fill="none"><path d="m170 225.700 266-8.400M740 209l132-3.700M170 360l240-7M512.700 168l-4.700 29"/></g>
<path d="M876 168h490v305H825l-1-12z" fill="#a1b95d"/>
<path d="M1252 168h114v278l-542 15z" fill="#9fb65a"/>
<path d="m824 461 542-15v27H825z" fill="#7d8e46"/>
<path d="m436 198.300 311-8.800-32.500 181-310 8.500z" fill="#a1b85d"/>
<path d="m436 198.300 64-2-16 93.500-79.500 89z" fill="#99ad59"/>
<path d="m655 193.500 92-4-32.500 181L639 284z" fill="#99ad59"/>
<path d="m404.500 378.700 310-8.400 8 64-310 8.400z" fill="#7d8e46"/>
<path d="m747 189.500 8 63-32.500 182-8-64z" fill="#6b7b3c"/>
<path d="m170 450.300 393-11.300" stroke="#f00"/>
<g fill="none" stroke="#0a800a"><path d="m178 213 10 0 5 4 2 7-2 8-5 4h-10l-5-4-2-8 2-7zM609 169.500h10l5 4 2 7-2 8-5 4h-10l-5-4-2-8 2-7z"/></g>
<text x="174" y="230" class="axis">A1</text><text x="609" y="186" class="axis">8</text>
<path d="m170 225.700 27-1M615 168l-3.500 24" stroke="#f00"/>
<g fill="none" stroke="#fff" stroke-opacity=".5"><circle cx="767.500" cy="320.500" r="135.500"/><circle cx="767.500" cy="185" r="8.500"/><circle cx="767.500" cy="456" r="8.500"/><circle cx="632" cy="320.500" r="8.500"/><circle cx="903" cy="320.500" r="8.500"/></g>
<path d="M225 421h37v-2l11 3-11 3v-2h-37z" fill="#f00" stroke="#f00"/>
<path d="m225 421 3-18 3 1-3 18zM226 401l4-6 3 6" fill="#0f0" stroke="#0f0"/><path d="m223.500 422-2-27h-3l2-11 5 10h-2l4 28z" fill="#0080ff" stroke="#0080ff"/>
<path d="M206 377.500h10l-10 9.500h10" fill="none" stroke="#0080ff"/><path d="m238 394 4 4.500 5-4.500m-5 4.500v4.500" fill="none" stroke="#0f0"/><path d="m263 408 10 10m0-10-10 10" fill="none" stroke="#f00"/>
</svg>
</div>

<div class="row snap">
<div class="panel"><span class="grip"></span><button class="b"><svg class="i"><use href="#ortho"/></svg>正交</button><button class="b on"><svg class="i"><use href="#snap"/></svg>对象捕捉</button><button class="b"><svg class="i"><use href="#dyn"/></svg>动态输入</button></div>
<div class="panel"><span class="grip"></span><button class="b"><svg class="i"><use href="#cross"/></svg>交点</button><button class="b on"><svg class="i"><use href="#perp"/></svg>垂点</button><button class="b on"><svg class="i"><use href="#mid"/></svg>中点</button><button class="b"><svg class="i"><use href="#vert"/></svg>顶点</button><button class="b"><svg class="i"><use href="#coord"/></svg>坐标</button></div>
<div class="panel"><span class="grip"></span><span class="combo s"><select aria-label="偏移方式"><option>不偏移</option></select></span><span class="sep"></span><div class="spins"><label for="sx">X=</label><span class="spin"><input id="sx" value="0" disabled><i></i></span><span>mm</span><label for="sy">Y=</label><span class="spin"><input id="sy" value="0" disabled><i></i></span><span>mm</span></div><span class="sep"></span><div class="spins"><input type="checkbox" id="rot"><label class="dark" for="rot">旋转</label><span class="spin w"><input aria-label="角度" value="0.000" disabled><i></i></span><span>°</span></div></div>
</div>

<div class="dock">
<div class="dockgrip"><button aria-label="关闭面板"><svg viewBox="0 0 10 10"><path d="M.5.5h9v9h-9zM2 2l6 6M8 2 2 8"/></svg></button><span></span></div>
<div class="dockbody">
<div class="rebarbar"><button class="b off" aria-label="首条"><svg class="i"><use href="#nfirst"/></svg></button><button class="b off" aria-label="上一条"><svg class="i"><use href="#nprev"/></svg></button><button class="b off" aria-label="下一条"><svg class="i"><use href="#nnext"/></svg></button><button class="b off" aria-label="末条"><svg class="i"><use href="#nlast"/></svg></button><span class="sep"></span><button class="b off" aria-label="上移"><svg class="i"><use href="#nup"/></svg></button><button class="b off" aria-label="下移"><svg class="i"><use href="#ndown"/></svg></button><span class="sep"></span><button class="b off"><svg class="i"><use href="#gins"/></svg>插入</button><button class="b off"><svg class="i"><use href="#gdel"/></svg>删除</button><button class="b off"><svg class="i"><use href="#gscale"/></svg>缩尺配筋</button><button class="b off"><svg class="i"><use href="#ginfo"/></svg>钢筋信息</button><button class="b off"><svg class="i"><use href="#glib"/></svg>钢筋图库</button><button class="b"><svg class="i"><use href="#other"/></svg>其他<span class="dd t"></span></button><button class="b close">关闭</button><span class="sep"></span><span class="total">单构件钢筋总重(kg)：0</span></div>
<div class="gridbox">
<table>
<colgroup><col class="c32"><col class="c73"><col class="c56"><col class="c36"><col class="c33"><col class="c201"><col class="c166"><col class="c156"><col class="c61"><col class="c38"><col class="c39"><col class="c49"><col class="c61"><col class="c61"><col class="c71"><col class="c73"></colgroup>
<thead><tr><th></th><th>筋号</th><th class="hot">直径(mm)</th><th>级别</th><th>图号</th><th>图形</th><th>计算公式</th><th>公式描述</th><th>长度(mm)</th><th>根数</th><th>搭接</th><th>损耗(%)</th><th>单重(kg)</th><th>总重(kg)</th><th>钢筋归类</th><th>搭接形式</th></tr></thead>
<tbody><tr><th class="rowno">1*</th><td></td><td class="cur"></td><td></td><td></td><td></td><td></td><td></td><td></td><td></td><td></td><td></td><td></td><td></td><td></td><td></td></tr></tbody>
</table>
<div class="hbar wide"><svg class="ar" viewBox="0 0 10 10"><path d="M7 1.500 3.500 5 7 8.500"/></svg><span class="track"><span class="gthumb"></span></span><svg class="ar" viewBox="0 0 10 10"><path d="M3 1.500 6.500 5 3 8.500"/></svg></div>
</div>
</div>
</div>
</section>
</div>

<footer class="status"><span class="s1">X=146084 Y=2214</span><span class="s2">层高:2.15m</span><span class="s3">底标高:-2.2m</span><span class="s4">0</span><span class="fill"></span><span class="s5">224.1 FPS</span></footer>

<div class="taskbar">
<button class="start" aria-label="开始"><svg><use href="#win"/></svg></button>
<label class="search"><svg viewBox="0 0 22 22"><circle cx="11" cy="11" r="9" fill="none" stroke="#fff" stroke-width="2.500"/></svg><input type="text" placeholder="在这里输入你要搜索的内容" aria-label="搜索"><svg class="mic" viewBox="0 0 14 18"><path d="M4.500 1.500h5v9h-5zM1.500 8v4.500h11V8M7 13v3M4 16.500h6" fill="none" stroke="#999"/></svg></label>
<div class="apps">
<button aria-label="任务视图"><svg viewBox="0 0 24 24"><path d="M6.500 5.500h11v13h-11zM4 7.500H2.500v9H4M20 7.500h1.500v9H20" fill="none" stroke="#fff" stroke-width="1.200"/></svg></button>
<button aria-label="风车"><svg viewBox="0 0 24 24" fill="#e6e6e6"><path d="M2 6.500C2 1.500 8 1 11.500 3 9 6 10 9 12 11.500 8 12.500 2 11.500 2 6.500zM17.500 2c5 0 5.500 6 3.500 9.500-3-2.500-6-1.500-8.500.5C11.500 8 12.500 2 17.500 2zM22 17.500c0 5-6 5.500-9.500 3.500 2.500-3 1.500-6-.5-8.500 4-1 10 0 10 5zM6.500 22c-5 0-5.500-6-3.500-9.500 3 2.500 6 1.500 8.500-.5 1 4 0 10-5 10z"/></svg></button>
<button aria-label="浏览器"><svg viewBox="0 0 24 24" fill="#e6e6e6"><use href="#eglyph"/><path d="M3 23C-1 17 11 2 20 1c3 0 3 2 2 4 0-2-2-2-4-1C10 8 4 16 4 20c0 2 1 2 3 2-1 1-3 2-4 1z"/></svg></button>
<button aria-label="极速"><svg viewBox="0 0 24 24"><path d="M21 4c-3 2-5-1-9 1-7 2-9 10-4 14 5 3 11 0 11-5 0-4-6-5-7-1-1 3 3 4 4 2M12 5c6-1 9 5 7 11-2 5-10 7-15 1" fill="none" stroke="#ddd" stroke-width="1.200"/></svg></button>
<button aria-label="Edge"><svg viewBox="0 0 24 24" fill="#0078d7"><path d="M2 11C3 5 7 2 12 2c7 0 10 5 10 11H9c0 6 7 7 12 4v4c-7 4-17 1-17-8 0-3 2-6 5-7-4 0-6 3-7 5zm7-2h8c0-5-7-5-8 0z"/></svg></button>
<button aria-label="IE"><svg viewBox="0 0 24 24" fill="#37a1ea"><use href="#eglyph"/><path d="M2 23C-1 17 11 2 21 1c3 0 2 3 1 5 0-3-2-3-5-1C10 9 4 16 4 20c0 2 2 1 4 1-2 2-4 3-6 2z" fill="#f7ca2c"/></svg></button>
<button class="run" aria-label="资源管理器"><svg viewBox="0 0 24 24"><path d="M1 3h9l2 2h11v16H1z" fill="#fce294"/><path d="M1 3h9l2 3H1z" fill="#eeb73b"/><path d="M5 14h14v8h-4v-4H9v4H5z" fill="#38a3dc"/></svg></button>
<button class="run" aria-label="绿色浏览器"><svg viewBox="0 0 24 24"><circle cx="12" cy="12.500" r="10" fill="#5cb531" stroke="#e4f3dc" stroke-width="1.500"/><path d="M18 14H9c0 3 4 4.500 8 2.500v2.500c-5 2.500-11 0-11-6 0-4 3-6.500 6.500-6.500S18 9.500 18 14zm-3.500-2.500c0-3-5-3-5.500 0z" fill="#fff" fill-rule="evenodd"/><path d="M3 19C6 9 14 3 22 1" fill="none" stroke="#2c8119" stroke-width="1.500"/></svg></button>
<button class="run" aria-label="文档"><svg viewBox="0 0 24 24"><rect width="24" height="24" rx="2" fill="#f79b1d"/><path d="m3 6 13-2 4 15-14 3z" fill="#fff8df"/><path d="m6 9 8-1M7 12l8-1M8 16l5-1" stroke="#9c682a"/><path d="m11 16 10-14 2 1-9 13-3 2z" fill="#a83d17"/></svg></button>
<button class="run" aria-label="广联达G"><svg viewBox="0 0 24 24"><path d="M23 2c-3 2-6-1-11 1C3 5-1 14 4 20c6 6 18 3 18-6 0-5-7-6-9-2 4-1 5 1 4 3-2 4-9 3-9-2 0-6 6-8 10-7 3 0 5-2 5-4z" fill="#189ce8"/></svg></button>
<button class="run act" aria-label="GGJ2013"><svg viewBox="0 0 16 16"><use href="#app"/></svg></button>
</div>
<div class="tray">
<span>链接</span>
<svg class="t16" viewBox="0 0 16 16"><path d="m3 11 5-5.500 5 5.500"/></svg>
<svg class="t16" viewBox="0 0 16 16"><path d="M5.500 4.500h9v7h-9zM15 7h1v2h-1M1 4h4v3l-2 1-2-1zM2 2v2M4 2v2M3 8v4h3"/><path d="M7 6h6v4H7z" fill="#fff"/></svg>
<svg class="t16" viewBox="0 0 16 16"><path d="M2 14C2 8 7 3 14 2M5 14c0-4 4-8 9-8M8 14c0-2 3-5 6-5M11 14c0-1 1-2 3-2"/></svg>
<svg class="kb" viewBox="0 0 24 14"><path d="M1 1h22v12H1zM6 10h12"/><path d="M3 4h18M3 7h18" stroke-dasharray="1 1"/></svg>
<span>英</span>
<svg class="t16 sg"><use href="#sogou"/></svg>
<time>14:13<br>2018/7/12</time>
<svg class="note" viewBox="0 0 18 18"><path d="M1.500 2.500h15v11h-5l-3 3v-3h-7z"/></svg>
<span class="peek"></span>
</div>
</div>
</body>
</html>
```
FILE: styles.css
```css
*{box-sizing:border-box}
:root{--ui:"Noto Sans","Noto Sans CJK SC",sans-serif;--song:"Liberation Serif","Noto Sans CJK SC",serif}
body{margin:0;height:100vh;display:flex;flex-direction:column;overflow:hidden;background:#f0f0f0;font:12px/16px var(--ui);color:#000}
button,input,select{font:inherit;color:inherit;border:0;background:none;padding:0;margin:0;border-radius:0}
button{white-space:nowrap;flex:none}
h1,h2{font:inherit;margin:0}
svg{display:block;flex:none}
.sprite{position:absolute;width:0;height:0}
.i{width:16px;height:16px}

.titlebar{position:relative;flex:none;height:24px;display:flex;align-items:center;gap:5px;padding:0 3px 0 2px;background:#fff}
.titlebar h1{flex:1;white-space:nowrap;font-family:Inter,"Noto Sans CJK SC",sans-serif}
.winbtns{display:flex;gap:1px}
.winbtns button{width:45px;height:20px;display:grid;place-items:center}
.winbtns svg{width:12px;height:12px;fill:none;stroke:#000}
.ime{position:absolute;right:192px;top:3px;width:200px;height:24px;padding:0 6px 0 28px;display:flex;align-items:center;justify-content:space-between;border:1px solid #a9c3dc;background:#fff;color:#1e70c8;z-index:2}
.ime b{font-size:14px}
.ime .m{width:16px;height:16px;fill:#1e70c8}
.ime .pale{fill:#a8bdd6}
.ime .logo{position:absolute;left:-7px;top:-4px;width:28px;height:28px}
.blob{position:absolute;left:-2px;top:-5px;width:46px;height:4px;background:#4bc964;border-radius:0 0 20px 20px}

.menubar{flex:none;height:30px;display:flex;align-items:center;padding-left:7px;white-space:nowrap}
.menubar>button{margin-right:11px}
.ic{display:flex;align-items:center;gap:3px}
.menubar .ic .dd{margin-left:4px}
.menubar .who{margin:0 6px 0 15px}
.tip{width:188px;height:28px;line-height:28px;padding-left:28px;color:#5c2e00;text-decoration:none;background:linear-gradient(#fcfcfc,#f0f0f0)}
.account{flex:1;height:28px;margin-left:3px;padding:0 2px;display:flex;align-items:center;gap:8px;background:linear-gradient(#fcfcfc,#f0f0f0)}
.bellbtn svg{width:14px;height:16px}
.more{margin-left:auto;align-self:flex-start;font-size:14px;font-weight:700;line-height:14px;padding-right:2px}

.row{flex:none;display:flex;gap:3px}
.panel{display:flex;align-items:center;padding-left:3px;background:linear-gradient(#fcfcfc,#f0f0f0)}
.std{height:30px;padding:0 1px 2px}
.std .panel{padding-left:1px}
.pa{width:149px}
.pb{width:548px}
.pc{flex:1}
.b{display:flex;align-items:center;gap:4px;height:22px;padding:0 4px 0 3px}
.on{background:#dce9f5;box-shadow:inset 0 0 0 1px #0078d7}
.off{color:#868686}
.dd{width:8px;height:4px;background:currentColor;clip-path:polygon(1px 0,8px 0,4.5px 4px)}
.dd.t{margin-left:-4px}
.sep{flex:none;width:1px;height:16px;margin:0 2px 0 3px;background:#b9b9b9}
.grip{flex:none;width:5px;height:16px;background:repeating-linear-gradient(#b5b5b5 0 2px,transparent 2px 4px) 2px 0/2px 100% no-repeat}

.main{flex:1;min-height:0;display:flex;gap:4px}
.side{flex:none;width:166px;display:flex;flex-direction:column;font-family:var(--song);background:#fafafa}
.sidehead{flex:none;height:16px;display:flex;align-items:center;background:#0550dc;color:#fff;margin-bottom:1px}
.sidehead h2{flex:1}
.sidehead button{width:18px}
.sidehead svg{width:10px;height:10px;fill:none;stroke:#fff}
.navbtn{height:22px;margin-right:1px;background:#f0f0f0;border:1px solid #a0a0a0;border-top-color:#fff}
.treetools{flex:none;height:27px;display:flex;align-items:center;gap:6px;padding-left:6px;background:linear-gradient(#fcfcfc,#f0f0f0);border-left:1px solid #a0a0a0}
.treetools svg{width:16px;height:16px}
.treebox{flex:1;min-height:0;margin:0 2px 2px;padding:1px;display:flex;flex-direction:column;border:1px solid #828790;background:#fff}
.treeview{flex:1;min-height:0;display:flex}
.tree{flex:1;min-width:0;margin:0;padding:0;list-style:none;overflow:hidden}
.tree li{display:flex;height:16px;white-space:nowrap;padding-left:10px}
.tree li span{padding:0 4px;line-height:16px}
.tree .sel{background:#d9d9d9}
.g{width:31px;height:16px;background:repeating-linear-gradient(#808080 0 1px,transparent 1px 2px) 1px 0/1px 100% no-repeat,repeating-linear-gradient(#808080 0 1px,transparent 1px 2px) 20px 0/1px 100% no-repeat,repeating-linear-gradient(90deg,#808080 0 1px,transparent 1px 2px) 20px 8px/11px 1px no-repeat}
.g.end{background-size:1px 100%,1px 8px,11px 1px}
.tree .f{padding-left:7px}
.ch{width:15px;height:16px;display:flex;align-items:center}
.ch::before{content:"";width:6px;height:6px;margin:0 0 4px 1px;border:solid #444;border-width:0 2px 2px 0;transform:rotate(45deg)}
.ch.shut::before{margin:0;border-color:#aaa;transform:rotate(-45deg)}
.ch.none::before{border:0}
.badge{width:40px;height:16px;margin-left:52px}
.vbar{flex:none;width:16px;display:flex;flex-direction:column;align-items:center;justify-content:space-between;padding:3px 0;background:#f0f0f0}
.ar{width:10px;height:10px;fill:none;stroke:#505050;stroke-width:1.6}
.track{flex:1;display:flex;align-self:stretch;margin:0 4px}
.vbar .track{margin:4px 0}
.vthumb{width:100%;height:51%;margin-top:200px;background:#cdcdcd}
.hbar{flex:none;height:16px;display:flex;align-items:center;padding:0 20px 0 3px;background:#f0f0f0}
.hthumb{width:96%;background:#cdcdcd}

.work{flex:1;min-width:0;display:flex;flex-direction:column}
.edit{height:26px}
.comp,.draw{height:29px}
.combo{position:relative;width:70px;height:23px;margin-left:2px;background:#fff}
.combo.s{width:56px;margin-left:1px}
.combo select{width:100%;height:100%;padding:0 0 0 2px;appearance:none}
.combo::after{content:"";position:absolute;right:0;top:0;width:12px;height:100%;background:linear-gradient(#000,#000) center/7px 4px no-repeat;clip-path:polygon(2px 9px,9px 9px,5.5px 13px);pointer-events:none}
.combo.box{margin:0 2px 0 0;border:1px solid #767676;background:#f4f4f4}
.combo.box::after{opacity:.5}
.comp .sep{margin-left:5px}
.stub{width:30px;background:linear-gradient(90deg,#f0f0f0,#fff)}
.canvas{flex:1;min-height:0;background:#000}
.canvas svg{width:100%;height:100%}
.axis{font:14px "Liberation Mono",monospace;fill:#eee}

.snap{height:30px;align-items:stretch}
.snap .sep{margin:0 3px}
.spins{display:flex;align-items:center;gap:3px;color:#868686}
.spins .dark{color:#000;margin:0 4px}
.spin{display:flex;width:58px;height:23px;border:1px solid #767676;background:#f4f4f4}
.spin.w{width:68px}
.spin input{flex:1;min-width:0;text-align:right}
.spin i{width:18px;background:#666;clip-path:polygon(7px 8px,10px 4px,13px 8px,7px 8px,7px 14px,10px 18px,13px 14px,7px 14px)}
.spins input[type=checkbox]{appearance:none;width:12px;height:12px;border:1px solid #999}

.dock{flex:none;height:203px;display:flex;gap:3px;padding:4px 2px 1px 1px}
.dockgrip{width:10px;display:flex;flex-direction:column;gap:2px}
.dockgrip svg{width:10px;height:10px;fill:none;stroke:#4d3030}
.dockgrip span{flex:1;background:radial-gradient(circle,#b8b8b8 1px,transparent 1.5px) 0 0/5px 5px}
.dockbody{flex:1;min-width:0;display:flex;flex-direction:column}
.rebarbar{flex:none;height:26px;display:flex;align-items:center;background:linear-gradient(#fcfcfc,#f0f0f0)}
.close{padding-left:4px}
.total{padding-left:4px}
.gridbox{flex:1;min-height:0;margin-left:-1px;display:flex;flex-direction:column;justify-content:space-between;overflow:hidden;border:1px solid #a0a0a0;background:#fff;font-family:var(--song)}
table{table-layout:fixed;width:1206px;border-collapse:collapse}
th,td{height:19px;padding:0;border:1px solid #bdbdbd;border-width:0 1px 1px 0;font-weight:400;line-height:18px;white-space:nowrap}
thead th{background:linear-gradient(#fff,#f0f0f0)}
thead .hot{background:#f6c36d;color:#50004c}
.rowno{background:#ffd48e;color:#50004c}
.cur{background:#d7e8f7;box-shadow:inset 1px 0 #000}
.c32{width:32px}.c33{width:33px}.c36{width:36px}.c38{width:38px}.c39{width:39px}.c49{width:49px}.c56{width:56px}.c61{width:61px}.c71{width:71px}.c73{width:73px}.c156{width:156px}.c166{width:166px}.c201{width:201px}
.wide{padding:0 3px}
.gthumb{width:72%;background:#cdcdcd}

.status{flex:none;height:22px;display:flex;gap:2px;padding-top:1px;font-family:var(--song);background:#fff}
.status span{border:1px solid #d4d4d4;padding-left:1px;line-height:20px;background:linear-gradient(#fcfcfc,#f0f0f0);white-space:nowrap}
.s1{width:148px}.s2{width:78px}.s3{width:98px}.s4{width:48px}.s5{width:70px}
.status .fill{flex:1}

.taskbar{flex:none;height:40px;display:flex;background:#000b0e;color:#fff}
.start{width:48px;display:grid;place-items:center;background:#000}
.start svg{width:16px;height:16px}
.search{width:344px;display:flex;align-items:center;padding:0 14px 0 9px;gap:5px;background:#333}
.search svg{width:22px;height:22px}
.search .mic{width:14px;height:18px}
.search input{flex:1;min-width:0;font-size:14px}
.search input::placeholder{color:#8f8f8f;opacity:1}
.apps{display:flex;gap:1px}
.apps button{width:48px;display:grid;place-items:center}
.apps button:nth-child(3),.apps button:nth-child(5){margin-left:4px}
.apps svg{width:24px;height:24px}
.apps .run{margin:0 4px;width:40px;border-bottom:2px solid #76b9ed;padding-top:2px}
.apps .act{margin:0;width:48px;background:#333d40}
.tray{flex:1;display:flex;align-items:center;justify-content:flex-end;gap:10px}
.tray svg{fill:none;stroke:#fff;stroke-width:1.2}
.t16{width:16px;height:16px}
.tray .sg{stroke:none}
.kb{width:24px;height:14px;margin-left:20px}
.tray time{width:62px;margin:0 6px 0 8px;text-align:center;font-size:12px;line-height:19px}
.note{width:18px;height:18px}
.peek{width:5px;height:40px;margin-left:9px;border-left:1px solid #555}
```
